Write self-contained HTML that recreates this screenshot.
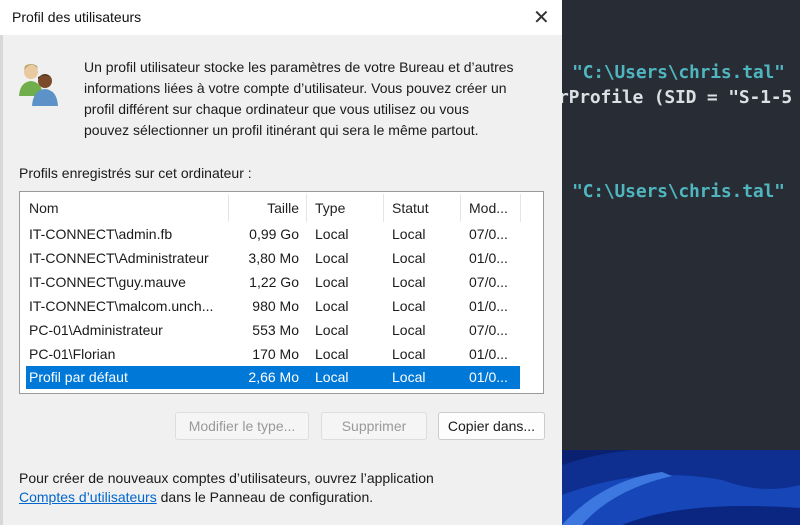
<!DOCTYPE html>
<html><head><meta charset="utf-8"><style>
*{margin:0;padding:0;box-sizing:border-box}
body{width:800px;height:525px;overflow:hidden;background:#282c34;position:relative;font-family:"Liberation Sans",sans-serif;}
.dlg{position:absolute;left:0;top:0;width:562px;height:525px;background:#f0f0f0}
.strip{position:absolute;left:0;top:0;width:3px;height:525px;background:#d8d8d8}
.title{position:absolute;left:0;top:0;width:562px;height:35px;background:#fff;font-size:14px;color:#111;padding:9px 0 0 12px}
.x{position:absolute;left:533px;top:5px;font-size:20px;color:#333}
.t{position:absolute;font-size:14px;color:#1a1a1a;white-space:nowrap}
.list{position:absolute;left:19px;top:191px;width:525px;height:203px;background:#fff;border:1px solid #9a9a9a}
.row{position:absolute;left:6px;width:494px;height:23px;font-size:14px;color:#1a1a1a}
.row span{position:absolute;top:3px;white-space:nowrap}
.sel{background:#0078d7;color:#fff}
.hd span{color:#222}
.div{position:absolute;top:2px;width:1px;height:28px;background:#e5e5e5}
.btn{position:absolute;top:412px;height:28px;border:1px solid #ddd;background:#f5f5f5;font-size:14px;color:#999;text-align:center;line-height:26px;border-radius:3px}
.term{position:absolute;font-family:"DejaVu Sans Mono","Liberation Mono",monospace;font-size:18px;font-weight:bold;white-space:nowrap;letter-spacing:-0.2px}
</style></head><body>
<div class="term" style="left:572px;top:62px;color:#4fb6c0">"C:\Users\chris.tal"</div>
<div class="term" style="left:558px;top:87px;color:#dcdfe4">rProfile (SID = "S-1-5</div>
<div class="term" style="left:572px;top:181px;color:#4fb6c0">"C:\Users\chris.tal"</div>
<svg style="position:absolute;left:562px;top:450px" width="238" height="75" viewBox="0 0 238 75">
<rect width="238" height="75" fill="#0a2070"/>
<path d="M0 15 Q60 -5 120 0 L238 0 L238 75 L0 75Z" fill="#0e2f90"/>
<path d="M0 45 Q80 15 160 30 Q200 45 238 35 L238 75 L0 75Z" fill="#1646b8"/>
<path d="M0 75 Q40 30 100 22 L110 26 Q50 40 20 75Z" fill="#3c78e0"/>
<path d="M60 75 Q120 50 238 58 L238 75Z" fill="#0a2680"/>
</svg>
<div class="dlg">
<div class="strip"></div>
<div class="title">Profil des utilisateurs</div>
<div class="x">✕</div>
<svg style="position:absolute;left:18px;top:60px" width="42" height="50" viewBox="0 0 42 50">
<circle cx="13" cy="12" r="7" fill="#e8c9a0"/><path d="M6 10 Q13 0 20 9 L19 6 Q13 2 7 6Z" fill="#b7a060"/>
<path d="M1 36 Q2 22 13 21 Q24 22 25 36Z" fill="#6fae4a"/>
<circle cx="27" cy="21" r="7" fill="#7a4a2a"/><path d="M20 19 Q27 10 34 19 Q30 13 20 17Z" fill="#2b2b2b"/>
<path d="M14 46 Q15 30 27 29 Q39 30 40 46Z" fill="#5d92c8"/>
</svg>
<div class="t" style="left:84px;top:57px;line-height:21px">Un profil utilisateur stocke les paramètres de votre Bureau et d’autres<br>informations liées à votre compte d’utilisateur. Vous pouvez créer un<br>profil différent sur chaque ordinateur que vous utilisez ou vous<br>pouvez sélectionner un profil itinérant qui sera le même partout.</div>
<div class="t" style="left:19px;top:165px">Profils enregistrés sur cet ordinateur :</div>
<div class="list">
<div class="div" style="left:208px"></div><div class="div" style="left:286px"></div><div class="div" style="left:363px"></div><div class="div" style="left:440px"></div><div class="div" style="left:500px"></div>
<div class="row hd" style="top:5px"><span style="left:3px">Nom</span><span style="right:221px">Taille</span><span style="left:289px">Type</span><span style="left:366px">Statut</span><span style="left:443px">Mod...</span></div>
<div class="row" style="top:31px"><span style="left:3px">IT-CONNECT\admin.fb</span><span style="right:221px">0,99 Go</span><span style="left:289px">Local</span><span style="left:366px">Local</span><span style="left:443px">07/0...</span></div>
<div class="row" style="top:55px"><span style="left:3px">IT-CONNECT\Administrateur</span><span style="right:221px">3,80 Mo</span><span style="left:289px">Local</span><span style="left:366px">Local</span><span style="left:443px">01/0...</span></div>
<div class="row" style="top:79px"><span style="left:3px">IT-CONNECT\guy.mauve</span><span style="right:221px">1,22 Go</span><span style="left:289px">Local</span><span style="left:366px">Local</span><span style="left:443px">07/0...</span></div>
<div class="row" style="top:103px"><span style="left:3px">IT-CONNECT\malcom.unch...</span><span style="right:221px">980 Mo</span><span style="left:289px">Local</span><span style="left:366px">Local</span><span style="left:443px">01/0...</span></div>
<div class="row" style="top:127px"><span style="left:3px">PC-01\Administrateur</span><span style="right:221px">553 Mo</span><span style="left:289px">Local</span><span style="left:366px">Local</span><span style="left:443px">07/0...</span></div>
<div class="row" style="top:151px"><span style="left:3px">PC-01\Florian</span><span style="right:221px">170 Mo</span><span style="left:289px">Local</span><span style="left:366px">Local</span><span style="left:443px">01/0...</span></div>
<div class="row sel" style="top:174px"><span style="left:3px">Profil par défaut</span><span style="right:221px">2,66 Mo</span><span style="left:289px">Local</span><span style="left:366px">Local</span><span style="left:443px">01/0...</span></div>
</div>
<div class="btn" style="left:175px;width:134px">Modifier le type...</div>
<div class="btn" style="left:321px;width:106px">Supprimer</div>
<div class="btn" style="left:438px;width:107px;background:#fdfdfd;border-color:#ccc;color:#1a1a1a">Copier dans...</div>
<div class="t" style="left:19px;top:469px;line-height:19px">Pour créer de nouveaux comptes d’utilisateurs, ouvrez l’application<br><span style="color:#0066cc;text-decoration:underline">Comptes d’utilisateurs</span> dans le Panneau de configuration.</div>
</div>
</body></html>
